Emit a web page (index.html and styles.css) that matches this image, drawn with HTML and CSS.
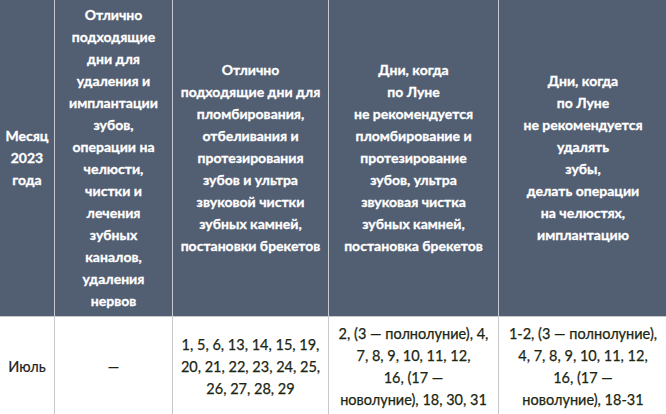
FILE: index.html
```html
<!DOCTYPE html>
<html lang="ru">
<head>
<meta charset="utf-8">
<title>Лунный календарь</title>
<link rel="stylesheet" href="styles.css">
</head>
<body>
<table class="moon">
  <colgroup>
    <col class="c1"><col class="c2"><col class="c3"><col class="c4"><col class="c5">
  </colgroup>
  <thead>
    <tr>
      <th class="h-pad">Месяц<br>2023<br>года</th>
      <th class="h-pad">Отлично<br>подходящие<br>дни для<br>удаления и<br>имплантации<br>зубов,<br>операции на<br>челюсти,<br>чистки и<br>лечения<br>зубных<br>каналов,<br>удаления<br>нервов</th>
      <th class="h-pad">Отлично<br>подходящие дни для<br>пломбирования,<br>отбеливания и<br>протезирования<br>зубов и ультра<br>звуковой чистки<br>зубных камней,<br>постановки брекетов</th>
      <th class="h-pad">Дни, когда<br>по Луне<br>не рекомендуется<br>пломбирование и<br>протезирование<br>зубов, ультра<br>звуковая чистка<br>зубных камней,<br>постановка брекетов</th>
      <th class="h-pad">Дни, когда<br>по Луне<br>не рекомендуется<br>удалять<br>зубы,<br>делать операции<br>на челюстях,<br>имплантацию</th>
    </tr>
  </thead>
  <tbody>
    <tr>
      <td class="month">Июль</td>
      <td class="days">—</td>
      <td class="days">1, 5, 6, 13, 14, 15, 19,<br>20, 21, 22, 23, 24, 25,<br>26, 27, 28, 29</td>
      <td class="days">2, (3 — полнолуние), 4,<br>7, 8, 9, 10, 11, 12,<br>16, (17 —<br>новолуние), 18, 30, 31</td>
      <td class="days">1-2, (3 — полнолуние),<br>4, 7, 8, 9, 10, 11, 12,<br>16, (17 —<br>новолуние), 18-31</td>
    </tr>
  </tbody>
</table>
</body>
</html>
```

FILE: styles.css
```css
html, body {
  margin: 0;
  padding: 0;
  background: #ffffff;
  overflow: hidden;
}

.moon {
  border-collapse: collapse;
  table-layout: fixed;
  width: 668px;
  margin: -1px 0 0 -1px;
  font-family: Lato, "Open Sans", sans-serif;
  font-size: 14px;
  line-height: 22px;
}

.c1 { width: 55px; }
.c2 { width: 118px; }
.c3 { width: 156px; }
.c4 { width: 170px; }
.c5 { width: 169px; }

.moon th,
.moon td {
  border: 1px solid #c6c9ce;
  text-align: center;
  vertical-align: middle;
  white-space: nowrap;
}

.moon th {
  background: #525e72;
  color: #ffffff;
  font-weight: 700;
  padding: 4px 0;
  -webkit-text-stroke: 0.3px #ffffff;
}

.moon td {
  padding: 6px 0;
  color: #1b2612;
  font-weight: 400;
  font-size: 14.5px;
  -webkit-text-stroke: 0.25px #1b2612;
}

.moon td.month {
  color: #222222;
  -webkit-text-stroke: 0.2px #222222;
}
```
